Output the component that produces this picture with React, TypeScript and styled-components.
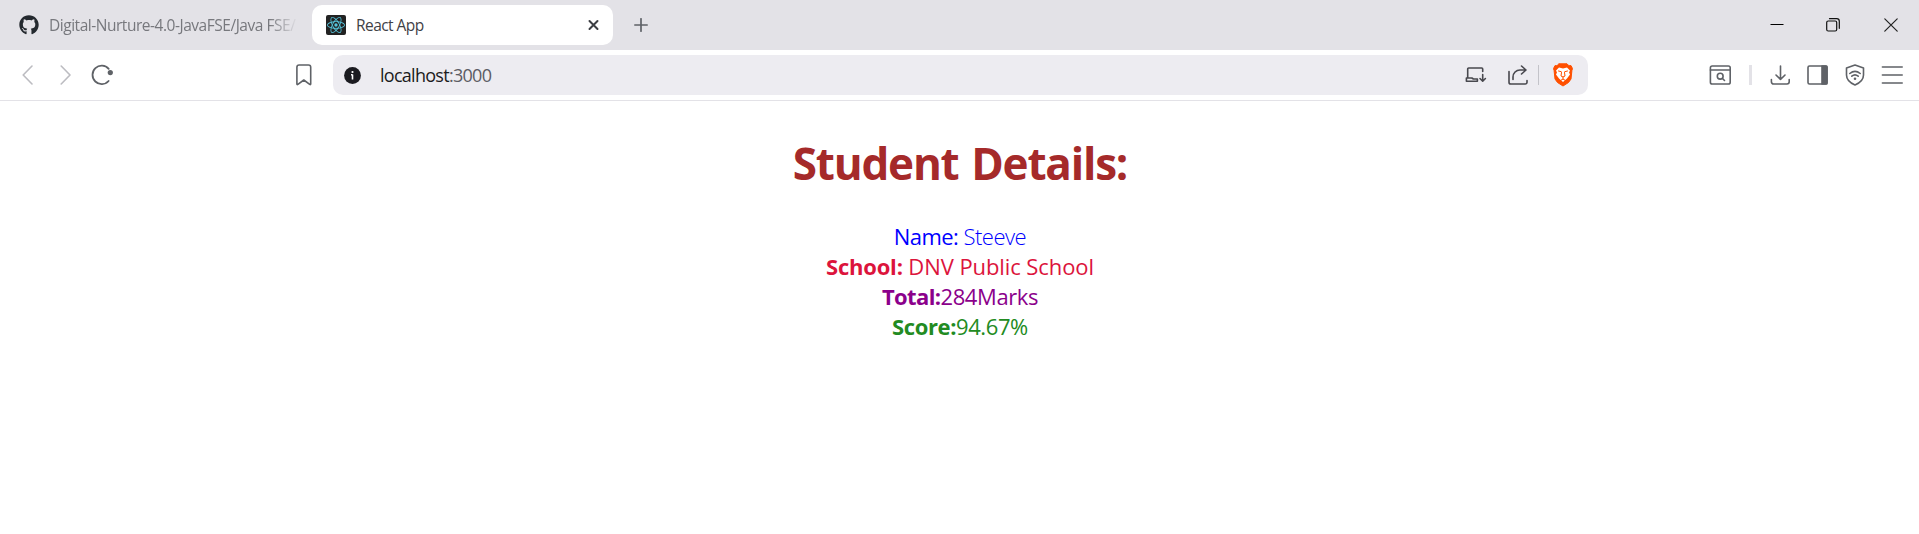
import React, { ReactNode } from 'react';
import styled, { createGlobalStyle } from 'styled-components';
import { SiReact } from 'react-icons/si';
import { FaGithub } from 'react-icons/fa';

const GlobalStyle = createGlobalStyle`
  * { box-sizing: border-box; }
  body { margin: 0; background: #fff; overflow: hidden; font-family: 'Open Sans', 'Noto Sans', sans-serif; }
  svg { display: block; flex: none; }
`;

const Row = styled.div`
  display: flex;
  align-items: center;
`;

const TabStrip = styled(Row)`
  height: 50px;
  background: #e3e2e7;
`;

const Tab = styled(Row)<{ $active?: boolean }>`
  height: 40px;
  width: ${(p) => (p.$active ? 301 : 312)}px;
  padding: ${(p) => (p.$active ? '0 13px 0 14px' : '0 15px 0 19px')};
  border-radius: 10px;
  background: ${(p) => (p.$active ? '#fff' : 'transparent')};
`;

const TabTitle = styled.span<{ $faded?: boolean; $spacing: number }>`
  flex: 1;
  min-width: 0;
  margin-left: 10px;
  overflow: hidden;
  white-space: nowrap;
  font-size: 15.5px;
  line-height: 20px;
  letter-spacing: ${(p) => p.$spacing}px;
  color: ${(p) => (p.$faded ? '#77787d' : '#3f4146')};
  mask-image: ${(p) => (p.$faded ? 'linear-gradient(to right, #000 220px, transparent 249px)' : 'none')};
`;

const Glyph = styled.svg<{ $left?: number }>`
  margin-left: ${(p) => p.$left ?? 0}px;
  fill: none;
  stroke: #5f6267;
  stroke-width: 1.6;
  stroke-linecap: round;
  stroke-linejoin: round;
`;

const Favicon = styled.span`
  display: grid;
  place-items: center;
  width: 20px;
  height: 20px;
  border-radius: 2px;
  background: #222;
  color: #56c5dc;
`;

const Toolbar = styled(Row)`
  height: 51px;
  border-bottom: 1px solid #e3e2e7;
`;

const AddressBar = styled(Row)`
  flex: none;
  width: 1255px;
  height: 40px;
  margin-left: 21px;
  padding-left: 11px;
  border-radius: 10px;
  background: #edecf1;
`;

const Url = styled.span`
  flex: none;
  width: 1085px;
  margin-left: 19px;
  font-size: 18px;
  letter-spacing: -0.72px;
  line-height: 24px;
  color: #1b1b20;
`;

const Port = styled.span`
  color: #5c5c64;
`;

const Divider = styled.span<{ $left: number; $wide?: boolean }>`
  flex: none;
  width: ${(p) => (p.$wide ? 3 : 1)}px;
  height: 20px;
  margin-left: ${(p) => p.$left}px;
  background: ${(p) => (p.$wide ? '#e3e2e7' : '#c3c3c9')};
`;

const Details = styled.main`
  display: flex;
  flex-direction: column;
  align-items: center;
  padding: 32px 0 0 1px;
`;

const Heading = styled.h1`
  margin: 0 0 28px;
  font-size: 44px;
  line-height: 60px;
  font-weight: 700;
  letter-spacing: -1.2px;
  word-spacing: 2.5px;
  color: brown;
`;

const Line = styled.div<{ $color: string }>`
  height: 30px;
  line-height: 30px;
  font-size: 22px;
  white-space: pre;
  color: ${(p) => p.$color};
`;

const Label = styled.span<{ $weight?: number; $spacing?: number }>`
  font-weight: ${(p) => p.$weight ?? 700};
  letter-spacing: ${(p) => p.$spacing ?? -0.4}px;
`;

const Value = styled.span<{ $weight?: number; $spacing?: number }>`
  font-weight: ${(p) => p.$weight ?? 400};
  letter-spacing: ${(p) => p.$spacing ?? -0.4}px;
`;

type IconProps = { w: number; h: number; left?: number; children: ReactNode };
const Icon = ({ w, h, left, children }: IconProps) => (
  <Glyph width={w} height={h} viewBox={`0 0 ${w} ${h}`} $left={left}>
    {children}
  </Glyph>
);

export default function App() {
  return (
    <>
      <GlobalStyle />
      <TabStrip>
        <Tab>
          <FaGithub size={20} color="#24292f" />
          <TabTitle $faded $spacing={-0.47}>Digital-Nurture-4.0-JavaFSE/Java FSE/</TabTitle>
        </Tab>
        <Tab $active>
          <Favicon><SiReact size={18} /></Favicon>
          <TabTitle $spacing={-0.55}>React App</TabTitle>
          <Icon w={12} h={12}><path d="M1.500 2l8 8M9.500 2l-8 8" stroke="#3c3e43" strokeWidth="2" /></Icon>
        </Tab>
        <Icon w={14} h={14} left={21}><path d="M7 .8v12.4M.8 7h12.4" strokeWidth="1.7" /></Icon>
        <Icon w={14} h={14} left={1122}><path d="M.5 6.500h13" stroke="#000" strokeWidth="1" strokeLinecap="butt" /></Icon>
        <Icon w={14} h={14} left={42}><g stroke="#111" strokeWidth="1.2"><rect x=".7" y="3" width="10" height="10" rx="1.5" /><path d="M3.5.7h7.2a2.6 2.6 0 0 1 2.6 2.6v7" /></g></Icon>
        <Icon w={14} h={14} left={44}><path d="M.8.8l12.4 12.4M13.2.8L.8 13.2" stroke="#222" strokeWidth="1.2" /></Icon>
      </TabStrip>
      <Toolbar>
        <Icon w={12} h={20} left={21}><path d="M11 1L2.200 10l8.800 9" stroke="#bcbcc1" /></Icon>
        <Icon w={12} h={20} left={27}><path d="M1.200 1l8.800 9-8.800 9" stroke="#bcbcc1" /></Icon>
        <Icon w={22} h={22} left={19}><path d="M17.700 4.900A9.200 9.200 0 1 0 17.600 17" strokeWidth="1.8" /><circle cx="19.300" cy="8.600" r="2.600" fill="#5f6267" stroke="none" /></Icon>
        <Icon w={16} h={22} left={183}><path d="M.9 20V3.200A2.200 2.200 0 0 1 3.100 1h9.400a2.200 2.200 0 0 1 2.200 2.200V20q0 1-1 .4L7.800 16l-5.900 4.400Q.9 21 .9 20z" /></Icon>
        <AddressBar>
          <Icon w={17} h={17}><circle cx="8.500" cy="8.500" r="8.400" fill="#1b1b20" stroke="none" /><path d="M8.500 7.500v5M7 7.700h1.500" stroke="#fff" strokeWidth="1.600" strokeLinecap="butt" /><circle cx="8.500" cy="5" r="1.100" fill="#fff" stroke="none" /></Icon>
          <Url>localhost<Port>:3000</Port></Url>
          <Icon w={22} h={18}><g stroke="#48484e"><path d="M2.700 11.500V3a1 1 0 0 1 1-1h13a1 1 0 0 1 1 1v2.500M1.400 12h5.500l1.500 1h4M1.400 12v3.200h11v-2M17.700 8.500v6.500M15 12.500l2.700 2.700 2.700-2.700" /></g></Icon>
          <Icon w={20} h={20} left={21}><g stroke="#48484e"><path d="M1 6.500v10.700A1.800 1.800 0 0 0 2.800 19h14.400a1.800 1.800 0 0 0 1.800-1.800V15.500M5 14.500V12a7 7 0 0 1 7-7h6M13.500 1l4.500 4-4.500 4" /></g></Icon>
          <Divider $left={10} />
          <Icon w={20} h={24} left={14}>
            <path d="M6 .8h8l2 2 2-.2 1.500 3-.6 2L18 16l-2.500 3.500L10 23l-5.500-3.500L2 16 1.100 7.600l-.6-2L2 2.600l2 .2z" fill="#ff5000" stroke="#ff5000" strokeWidth="1" />
            <path d="M6 4.500L3 7.500l1 2-1 2 3 4 4 3.500 4-3.500 3-4-1-2 1-2-3-3-4 1z" fill="#fff" stroke="none" />
            <path d="M5.500 8l2.700.7M14.500 8l-2.700.7M8.500 9.500L8 13l2 1 2-1-.5-3.500M10 14v2M7.500 17.500L10 16l2.500 1.500" stroke="#ff5000" strokeWidth="1" />
          </Icon>
        </AddressBar>
        <Icon w={22} h={20} left={121}><rect x="1.400" y="1" width="19.800" height="18" rx="1.800" /><path d="M1.400 5h19.800M13.500 13.500l2 2" /><circle cx="11.200" cy="11.200" r="2.900" /></Icon>
        <Divider $left={18} $wide />
        <Icon w={20} h={20} left={18}><path d="M10.500 1v13.500M6 10l4.500 4.500 4.500-4.500M1.400 14.500v2.300A2.200 2.200 0 0 0 3.600 19h13.400a2.200 2.200 0 0 0 2.200-2.200v-2.300" /></Icon>
        <Icon w={21} h={20} left={17}><rect x="1" y="1" width="19" height="18" rx="1.500" /><path d="M15 1h4.200q.8 0 .8.800v16.400q0 .8-.8.800H15z" fill="#5f6267" /></Icon>
        <Icon w={20} h={22} left={17}><path d="M10 1l8.500 3v7c0 5-3.800 8-8.500 10-4.700-2-8.500-5-8.500-10V4z" /><path d="M4.800 9.500Q10 5.200 15.200 9.500M6.800 12.200q3.200-2.600 6.400 0" /><circle cx="10" cy="14.800" r="1.300" fill="#5f6267" stroke="none" /></Icon>
        <Icon w={22} h={18} left={16}><path d="M1.400 1h19.800M1.400 9h19.800M1.400 17h19.800" /></Icon>
      </Toolbar>
      <Details>
        <Heading>Student Details:</Heading>
        <Line $color="blue"><Label $weight={400} $spacing={-0.55}>Name: </Label><Value $weight={300} $spacing={-0.5}>Steeve</Value></Line>
        <Line $color="crimson"><Label $spacing={-0.2}>School:</Label><Value $spacing={-0.08}> DNV Public School</Value></Line>
        <Line $color="darkmagenta"><Label $spacing={-0.6}>Total:</Label><Value>284Marks</Value></Line>
        <Line $color="forestgreen"><Label>Score:</Label><Value>94.67%</Value></Line>
      </Details>
    </>
  );
}
